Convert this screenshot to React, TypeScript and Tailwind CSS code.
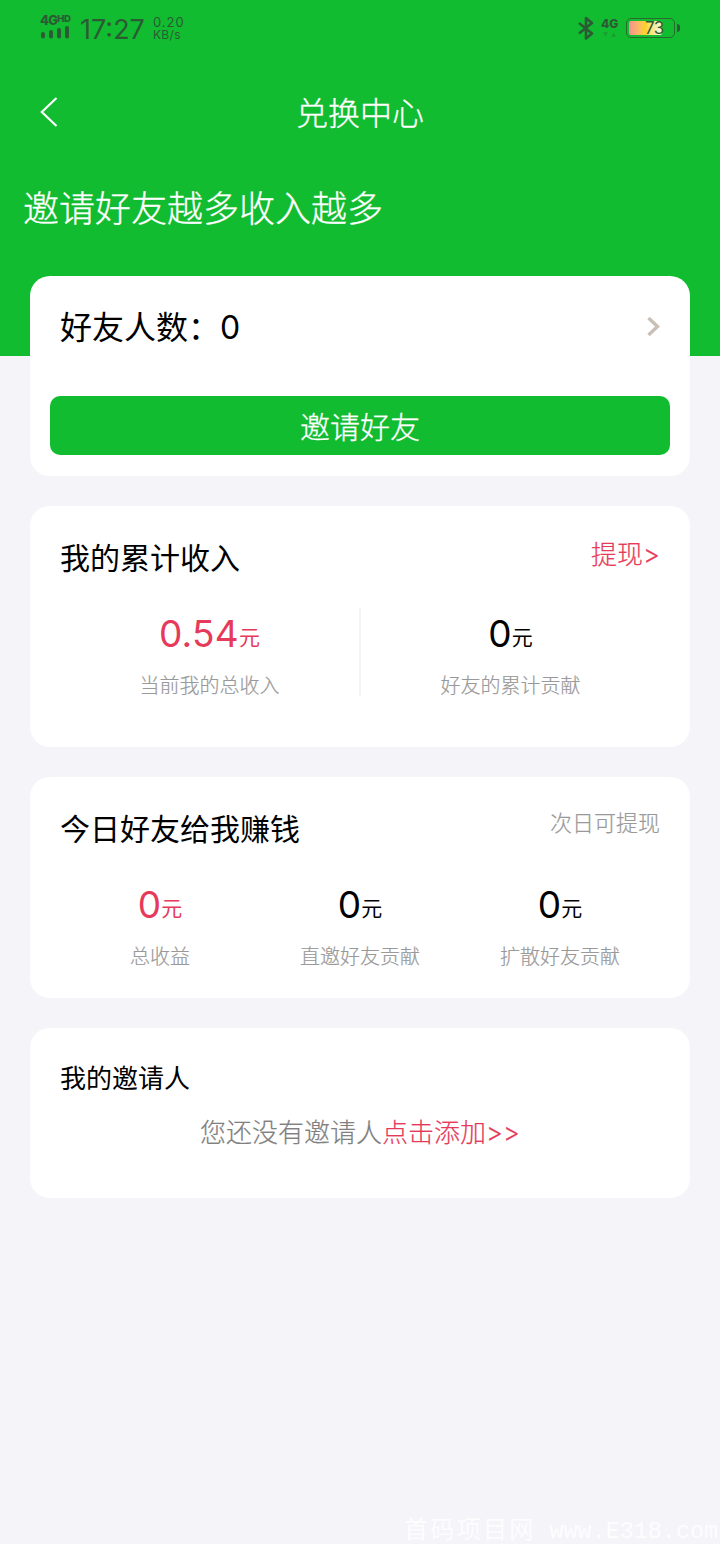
import type { ReactNode } from 'react'
import clsx from 'clsx'

type Stat = {
  value: string
  label: string
  highlight?: boolean
}

const TOTAL_STATS: Stat[] = [
  { value: '0.54', label: '当前我的总收入', highlight: true },
  { value: '0', label: '好友的累计贡献' },
]

const TODAY_STATS: Stat[] = [
  { value: '0', label: '总收益', highlight: true },
  { value: '0', label: '直邀好友贡献' },
  { value: '0', label: '扩散好友贡献' },
]

function StatusBar() {
  return (
    <div className="flex h-14 justify-between pl-10 pr-10 text-[#2b5b34]">
      <div className="flex">
        <div className="w-[31px] pt-[13px]">
          <div className="flex items-start font-extrabold">
            <span className="text-[13px] leading-[14px] tracking-[-0.8px]">4G</span>
            <span className="text-[9.500px] leading-[11px] tracking-[-0.3px]">HD</span>
          </div>
          <svg className="mt-[-1px]" width="30" height="13" viewBox="0 0 30 13" fill="currentColor">
            <rect x="1" y="6" width="4" height="6.500" rx="2" />
            <rect x="9" y="4" width="4" height="8.500" rx="2" />
            <rect x="17" y="2" width="4" height="10.500" rx="2" />
            <rect x="25" y="0" width="4" height="12.500" rx="2" />
          </svg>
        </div>
        <span className="ml-[9px] w-[73px] pt-[14px] text-[27px] leading-[32px]">17:27</span>
        <div className="pt-[16px] text-[13px] leading-[13px]">
          <div className="tracking-[1px]">0.20</div>
          <div className="text-[12px] leading-[12px] tracking-[0.3px]">KB/s</div>
        </div>
      </div>
      <div className="flex pt-[16px]">
        <svg width="16" height="24" viewBox="0 0 16 24" fill="none" stroke="currentColor" strokeWidth="2.600" strokeLinejoin="round">
          <path d="M1 7 L14 17.500 L8 22.500 V2 L14 7 L1 17.500" />
        </svg>
        <div className="ml-[7px] w-[18px]">
          <div className="text-[12px] font-extrabold leading-[15px]">4G</div>
          <svg className="ml-[2px] mt-[1px] opacity-30" width="14" height="6" viewBox="0 0 14 6" fill="currentColor">
            <path d="M0 0 H5 L2.500 5Z M8 5 H13 L10.500 0Z" />
          </svg>
        </div>
        <div className="ml-[7px] mt-[2px] flex h-[20px] w-[49px] items-center rounded-[5px] border-[1.500px] border-[#2b6a2f] p-[2px]">
          <div className="h-full w-[33px] rounded-[2px] bg-linear-to-r from-[#f58f8f] via-[#ffd21c] via-50% to-[#f0fbe0]">
            <span className="ml-[16px] block text-[17px] leading-[15px] tracking-[-0.5px]">73</span>
          </div>
        </div>
        <div className="ml-[2px] mt-[8px] h-[8px] w-[3px] rounded-r-full bg-[#2b5b34]" />
      </div>
    </div>
  )
}

function Card({ className, children }: { className?: string; children: ReactNode }) {
  return <section className={clsx('rounded-[20px] bg-white', className)}>{children}</section>
}

function StatItem({ value, label, highlight }: Stat) {
  return (
    <div className="flex-1 text-center">
      <div className={clsx('flex h-[52px] items-start justify-center text-[37px] leading-[52px]', highlight ? 'text-[#e63a5b]' : 'text-black')}>
        <span className={clsx(value.length > 1 && 'tracking-[0.3px]')}>{value}</span>
        <span className="pt-[4px] text-[21px]">元</span>
      </div>
      <div className="mt-[11px] text-[20px] font-light leading-[30px] text-[#999] [-webkit-text-stroke:0.2px]">{label}</div>
    </div>
  )
}

export default function App() {
  return (
    <div
      lang="zh-CN"
      className="flex h-[1544px] w-[720px] flex-col overflow-hidden bg-[#f4f4f9] font-['Inter','Noto_Sans_CJK_SC',sans-serif] text-black"
    >
      <header className="h-[356px] shrink-0 bg-[#12bc30] text-white">
        <StatusBar />
        <div className="mt-[26px] flex h-[60px] items-center px-10">
          <svg width="18" height="30" viewBox="0 0 18 30" fill="none" stroke="currentColor" strokeWidth="2.200">
            <path d="M16.500 1 L1.800 15 L16.500 29" />
          </svg>
          <h1 className="mr-[18px] flex-1 pt-1 text-center text-[32px] font-light leading-[48px] [-webkit-text-stroke:0.3px]">
            兑换中心
          </h1>
        </div>
        <p className="mt-[41px] pl-[23px] text-[36px] font-light leading-[52px] [-webkit-text-stroke:0.3px]">
          邀请好友越多收入越多
        </p>
      </header>

      <main className="-mt-20 flex flex-col gap-[30px] px-[30px]">
        <Card className="h-[200px] px-5 pt-[26px]">
          <div className="flex h-[50px] items-center justify-between px-[10px]">
            <span className="pt-[2px] text-[32px] leading-[50px]">好友人数：0</span>
            <svg width="13" height="20" viewBox="0 0 13 20" fill="none" stroke="#c8c0b4" strokeWidth="3.400">
              <path d="M1.500 1 L10.500 9.500 L1.500 18" />
            </svg>
          </div>
          <button className="mt-[44px] h-[59px] w-full rounded-[10px] bg-[#12bc30] pt-[3px] text-[30px] font-light text-white [-webkit-text-stroke:0.3px]">
            邀请好友
          </button>
        </Card>

        <Card className="h-[241px] px-[30px] pt-[28px]">
          <div className="flex h-[48px] justify-between">
            <h2 className="text-[30px] leading-[48px]">我的累计收入</h2>
            <a className="text-[26px] font-light leading-[42px] text-[#e63a5b] [-webkit-text-stroke:0.2px]">提现&gt;</a>
          </div>
          <div className="mt-[26px] flex h-[88px]">
            <StatItem {...TOTAL_STATS[0]} />
            <div className="w-[2px] bg-[#f4f4f6]" />
            <StatItem {...TOTAL_STATS[1]} />
          </div>
        </Card>

        <Card className="h-[221px] px-[30px] pt-[28px]">
          <div className="flex h-[48px] justify-between">
            <h2 className="text-[30px] leading-[48px]">今日好友给我赚钱</h2>
            <span className="text-[22px] font-light leading-[36px] text-[#999] [-webkit-text-stroke:0.2px]">次日可提现</span>
          </div>
          <div className="mt-[26px] flex">
            {TODAY_STATS.map((stat) => (
              <StatItem key={stat.label} {...stat} />
            ))}
          </div>
        </Card>

        <Card className="h-[170px] px-[30px] pt-[31px]">
          <h2 className="text-[26px] leading-[40px]">我的邀请人</h2>
          <p className="mt-[14px] text-center text-[26px] font-light leading-[40px] text-[#808080] [-webkit-text-stroke:0.2px]">
            您还没有邀请人<a className="text-[#e63a5b]">点击添加&gt;&gt;</a>
          </p>
        </Card>
      </main>

      <footer className="mt-auto flex items-baseline justify-end gap-[14px] pr-[2px] font-['Liberation_Mono','Noto_Sans_CJK_SC',monospace] leading-[24px] text-white/80">
        <span className="text-[24px] tracking-[2.300px]">首码项目网</span>
        <span className="text-[23.400px]">www.E318.com</span>
      </footer>
    </div>
  )
}
